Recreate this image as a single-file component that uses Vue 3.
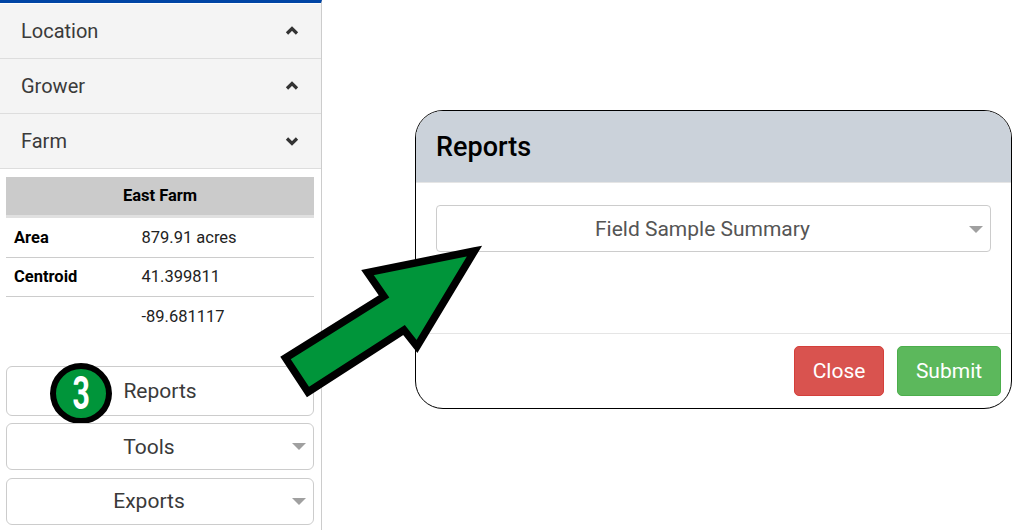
<script setup>
const accordions = [
  { label: 'Location', open: false },
  { label: 'Grower', open: false },
  { label: 'Farm', open: true },
]
const rows = [
  { key: 'Area', value: '879.91 acres' },
  { key: 'Centroid', value: '41.399811' },
  { key: '', value: '-89.681117' },
]
</script>

<template>
  <div class="page">
    <aside class="sidebar">
      <div v-for="a in accordions" :key="a.label" class="acc">
        <span>{{ a.label }}</span>
        <svg class="chev" width="14" height="10" viewBox="0 0 14 10">
          <path :d="a.open ? 'M2 2.5 L7 7.5 L12 2.5' : 'M2 7.5 L7 2.5 L12 7.5'" fill="none" stroke="#333" stroke-width="3.2" />
        </svg>
      </div>
      <div class="info">
        <div class="info-head">East Farm</div>
        <div v-for="(r, i) in rows" :key="i" class="info-row">
          <span class="k">{{ r.key }}</span>
          <span class="v">{{ r.value }}</span>
        </div>
      </div>
      <div class="actions">
        <div class="btn reports">
          Reports
          <div class="badge"><span>3</span></div>
        </div>
        <div class="btn select tools">Tools<i class="caret"></i></div>
        <div class="btn select exports">Exports<i class="caret"></i></div>
      </div>
    </aside>

    <main class="main">
      <section class="modal">
        <header class="m-head">Reports</header>
        <div class="m-body">
          <div class="m-select">Field Sample Summary<i class="caret"></i></div>
        </div>
        <footer class="m-foot">
          <div class="mbtn close">Close</div>
          <div class="mbtn submit">Submit</div>
        </footer>
      </section>
    </main>

    <svg class="arrow" width="1029" height="530" viewBox="0 0 1029 530">
      <polygon points="474.5,251 367.5,272.5 384,296.5 285.5,358 308,392 404,330 417,346.5" fill="#00953a" stroke="#000" stroke-width="7.5" stroke-miterlimit="6" />
    </svg>
  </div>
</template>

<style>
html, body { margin: 0; background: #fff; }
</style>

<style scoped>
.page {
  position: relative;
  display: flex;
  width: 1029px;
  height: 530px;
  overflow: hidden;
  font-family: Roboto, sans-serif;
  color: #333;
  background: #fff;
}
.sidebar {
  box-sizing: border-box;
  width: 322px;
  height: 530px;
  flex: none;
  border-right: 1px solid #ccc;
  border-top: 3px solid #0045a5;
  padding-top: 1px;
}
.acc {
  box-sizing: border-box;
  height: 55px;
  padding: 0 21px;
  display: flex;
  align-items: center;
  justify-content: space-between;
  background: #f4f4f4;
  border-bottom: 1px solid #ddd;
  font-size: 20px;
  color: #3a3a3a;
}
.chev { margin-right: 1px; }
.info { margin: 8px 7px 0 6px; font-size: 16.5px; color: #222; }
.info-head {
  box-sizing: border-box;
  height: 41px;
  background: #cbcbcb;
  border-bottom: 3px solid #e0e0e0;
  display: flex;
  align-items: center;
  justify-content: center;
  font-weight: 700;
  color: #000;
  padding-bottom: 2px;
}
.info-row {
  box-sizing: border-box;
  height: 39.5px;
  display: flex;
  align-items: center;
  border-bottom: 1px solid #ccc;
  padding-left: 8px;
}
.info-row:last-child { border-bottom: 0; }
.k { width: 127.5px; font-weight: 700; color: #000; }
.actions {
  margin: 29px 7px 0 6px;
  display: flex;
  flex-direction: column;
  gap: 7px;
}
.btn {
  position: relative;
  box-sizing: border-box;
  border: 1px solid #ccc;
  border-radius: 6px;
  display: flex;
  align-items: center;
  justify-content: center;
  font-size: 21px;
  color: #3a3a3a;
}
.reports { height: 50px; }
.select { height: 47px; padding-right: 22px; }
.tools { margin-bottom: 1px; padding-top: 2px; }
.caret {
  position: absolute;
  right: 7px;
  top: 50%;
  margin-top: -3px;
  width: 0;
  height: 0;
  border-left: 7px solid transparent;
  border-right: 7px solid transparent;
  border-top: 7px solid #a0a0a0;
}
.badge {
  position: absolute;
  left: 43px;
  top: -4px;
  box-sizing: border-box;
  width: 62px;
  height: 61px;
  border-radius: 50%;
  border: 6px solid #000;
  background: #00953a;
  display: flex;
  align-items: center;
  justify-content: center;
  color: #fff;
  font-size: 46px;
  font-weight: 700;
}
.badge span { display: block; transform: scaleX(0.66); }
.main {
  flex: 1;
  padding: 110px 0 0 93px;
}
.modal {
  box-sizing: border-box;
  width: 597px;
  height: 299px;
  border: 1px solid #000;
  border-radius: 28px;
  overflow: hidden;
  display: flex;
  flex-direction: column;
}
.m-head {
  box-sizing: border-box;
  height: 72px;
  flex: none;
  background: #cbd2da;
  border-bottom: 1px solid #e5e5e5;
  display: flex;
  align-items: center;
  padding-left: 20px;
  font-size: 27px;
  font-weight: 500;
  color: #000;
}
.m-body { flex: 1; padding: 22px 20px 0; }
.m-select {
  position: relative;
  box-sizing: border-box;
  height: 47px;
  padding-right: 22px;
  border: 1px solid #ccc;
  border-radius: 4px;
  display: flex;
  align-items: center;
  justify-content: center;
  font-size: 21px;
  color: #555;
}
.m-foot {
  box-sizing: border-box;
  height: 75px;
  flex: none;
  border-top: 1px solid #e5e5e5;
  padding: 12px 10px 0 0;
  display: flex;
  justify-content: flex-end;
  gap: 13px;
}
.mbtn {
  box-sizing: border-box;
  height: 50px;
  border-radius: 5px;
  display: flex;
  align-items: center;
  justify-content: center;
  color: #fff;
  font-size: 21px;
}
.close { width: 90px; background: #d9534f; border: 1px solid #d43f3a; }
.submit { width: 104px; background: #5cb85c; border: 1px solid #4cae4c; }
.arrow { position: absolute; left: 0; top: 0; pointer-events: none; }
</style>
